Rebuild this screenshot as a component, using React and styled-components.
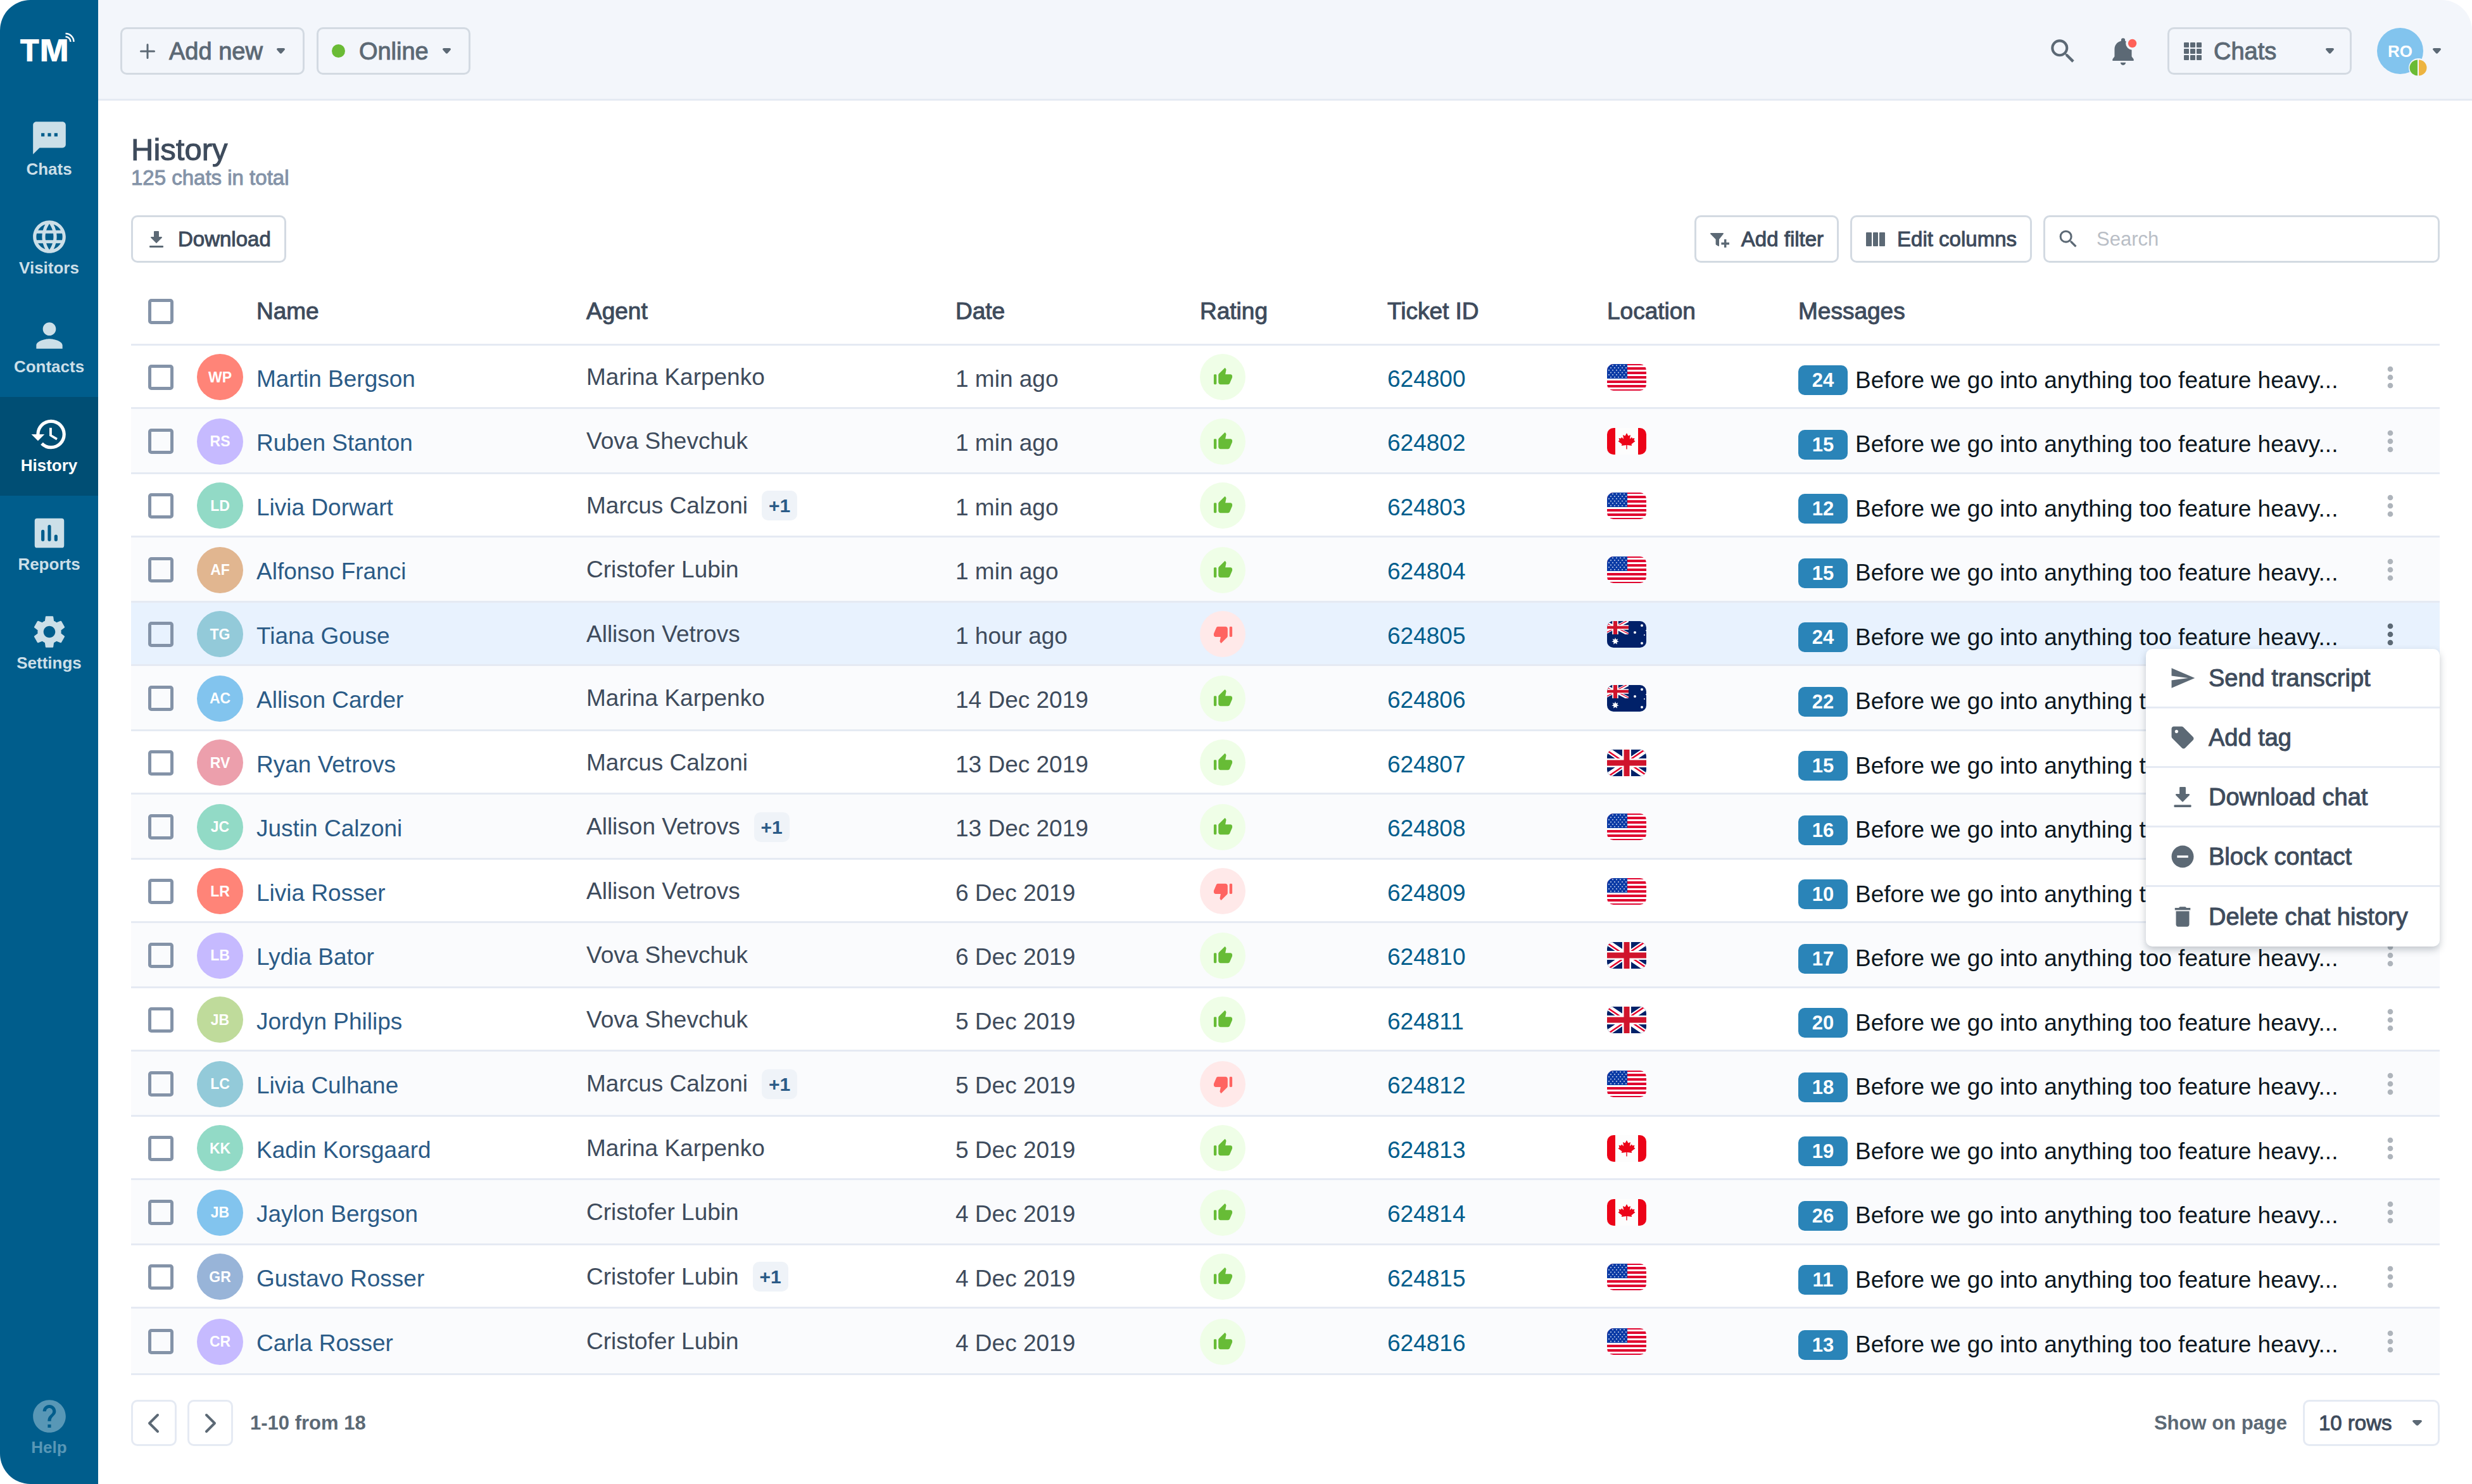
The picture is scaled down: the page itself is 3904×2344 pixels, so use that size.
import styled, { createGlobalStyle, css } from 'styled-components';
import {
  MdDelete,
  MdHelp,
  MdHistory,
  MdLanguage,
  MdMoreVert,
  MdPerson,
  MdRemoveCircle,
  MdSearch,
  MdSell,
  MdSend,
  MdSettings,
  MdSms,
} from 'react-icons/md';

const GlobalStyle = createGlobalStyle`
  :root {
    --brand: #005d8c;
    --brand-dark: #004e74;
    --topbar: #f3f6fb;
    --line: #e5eaf3;
    --control: #d3dae2;
    --ink: #3e4b5c;
    --slate: #5c6975;
    --muted: #8493a8;
    --name: #2b5b87;
    --badge: #2a84b8;
  }

  *,
  *::before,
  *::after {
    box-sizing: border-box;
  }

  body {
    margin: 0;
    background-color: #fff;
    color: var(--ink);
    font-family: 'Liberation Sans', Arial, sans-serif;
    font-size: 37px;
    line-height: 44px;
  }

  button,
  input,
  select {
    font: inherit;
    color: inherit;
    margin: 0;
  }

  svg {
    display: block;
    flex-shrink: 0;
  }
`;

/* There is no 500 weight in the font, a thin stroke stands in for it */
const medium = css`
  -webkit-text-stroke: 1px;
`;

const Layout = styled.div`
  display: grid;
  grid-template-columns: 155px 1fr;
  min-height: 100vh;
`;

/* ---------- Sidebar ---------- */

const Sidebar = styled.aside`
  display: flex;
  flex-direction: column;
  background-color: var(--brand);
  border-radius: 48px 0 0 48px;
  overflow: hidden;
  padding-bottom: 10px;
`;

const Logo = styled.a`
  position: relative;
  display: flex;
  align-items: center;
  justify-content: center;
  height: 159px;
  padding-right: 16px;
  color: #fff;
  font-family: Inter, sans-serif;
  font-size: 48px;
  font-weight: 800;
  line-height: 48px;
  text-decoration: none;

  svg {
    position: absolute;
    left: 102px;
    top: 50px;
  }
`;

const Nav = styled.nav`
  flex: 1;
  display: flex;
  flex-direction: column;
`;

const NavLink = styled.a`
  display: flex;
  flex-direction: column;
  align-items: center;
  gap: 3px;
  height: 156px;
  padding-top: 28px;
  color: ${props => (props.$faded ? '#5897b6' : '#ccdfe8')};
  font-size: 26px;
  font-weight: 700;
  line-height: 30px;
  text-decoration: none;

  ${props =>
    props.$active &&
    css`
      color: #fff;
      background-color: var(--brand-dark);
    `}

  svg {
    width: 62px;
    height: 62px;
  }
`;

/* ---------- Top bar ---------- */

const Topbar = styled.header`
  display: flex;
  justify-content: space-between;
  padding: 43px 49px 38px 35px;
  background-color: var(--topbar);
  border-bottom: 3px solid var(--line);
  border-radius: 0 48px 0 0;
  color: var(--slate);
  font-size: 38px;
`;

const TopGroup = styled.div`
  display: flex;
  align-items: center;
  gap: ${props => props.$gap}px;
`;

const TopButton = styled.button`
  display: flex;
  align-items: center;
  height: 75px;
  gap: ${props => props.$gap}px;
  padding: 0 28px 0 ${props => props.$left}px;
  background: none;
  border: 3px solid var(--control);
  border-radius: 10px;
  cursor: pointer;
  ${medium}
`;

const StatusDot = styled.span`
  width: 21px;
  height: 21px;
  border-radius: 50%;
  background-color: #6abb35;
`;

const IconButton = styled.button`
  display: flex;
  padding: 0;
  border: 0;
  background: none;
  cursor: pointer;
  color: ${props => props.$color || 'inherit'};
`;

const SelectBox = styled.div`
  display: grid;
  align-items: center;
  width: ${props => props.$width}px;

  > * {
    grid-area: 1 / 1;
  }

  > svg {
    pointer-events: none;
  }

  > svg:last-child {
    justify-self: end;
    margin-right: 28px;
  }

  > svg:first-child:not(:last-child) {
    margin-left: 26px;
  }
`;

const Select = styled.select`
  appearance: none;
  width: 100%;
  background: none;
  cursor: pointer;
  ${medium}
`;

const ModuleSelect = styled(Select)`
  height: 75px;
  padding: 0 50px 0 70px;
  border: 3px solid var(--control);
  border-radius: 10px;
`;

const Account = styled.button`
  display: flex;
  align-items: center;
  gap: 15px;
  margin-left: -5px;
  padding: 0;
  border: 0;
  background: none;
  cursor: pointer;
`;

const AccountAvatar = styled.span`
  position: relative;
  display: flex;
  align-items: center;
  justify-content: center;
  width: 73px;
  height: 73px;
  border-radius: 50%;
  background-color: #82c4ee;
  color: #fff;
  font-size: 26px;
  font-weight: 700;

  svg {
    position: absolute;
    right: -7px;
    bottom: -5px;
  }
`;

/* ---------- Page head ---------- */

const Main = styled.main`
  padding: 49px 51px 40px 52px;
`;

const Title = styled.h1`
  margin: 0;
  font-size: 49px;
  font-weight: 400;
  line-height: 56px;
  ${medium}
`;

const Subtitle = styled.p`
  margin: 0;
  color: var(--muted);
  font-size: 33px;
  line-height: 34px;
  ${medium}
`;

const Toolbar = styled.div`
  display: flex;
  align-items: center;
  gap: 18px;
  margin: 42px 0 24px;
`;

const Spacer = styled.div`
  flex: 1;
`;

const ToolButton = styled.button`
  display: flex;
  align-items: center;
  gap: 17px;
  height: 75px;
  padding: 0 21px 0 20px;
  background-color: #fff;
  border: 3px solid var(--control);
  border-radius: 10px;
  font-size: 33px;
  cursor: pointer;
  ${medium}

  svg {
    color: var(--slate);
  }
`;

const SearchField = styled.label`
  display: flex;
  align-items: center;
  gap: 26px;
  width: 626px;
  height: 75px;
  padding: 0 18px;
  border: 3px solid var(--control);
  border-radius: 10px;
  color: var(--slate);

  input {
    flex: 1;
    min-width: 0;
    padding: 0;
    border: 0;
    outline: 0;
    background: none;
    font-size: 31px;
  }

  input::placeholder {
    color: #b9bec6;
    opacity: 1;
  }
`;

/* ---------- Table ---------- */

const Table = styled.table`
  width: 100%;
  table-layout: fixed;
  border-collapse: separate;
  border-spacing: 0;
`;

const HeadCell = styled.th`
  height: 107px;
  padding: 2px 0 0;
  border-bottom: 3px solid var(--line);
  font-weight: 400;
  text-align: left;
  ${medium}
`;

const Cell = styled.td`
  padding: 2px 0 0;
  border-bottom: 3px solid var(--line);
  white-space: nowrap;
`;

const TextCell = styled(Cell)`
  padding-top: 8px;
`;

const MessageCell = styled(Cell)`
  padding-top: 12px;
`;

const ActionCell = styled(Cell)`
  position: relative;
  padding-left: 39px;
`;

const Row = styled.tr`
  height: 100px;

  &:nth-child(even) {
    height: 103px;
    background-color: #fafbfd;
  }

  &:last-child {
    height: 105px;
  }

  ${props =>
    props.$selected &&
    css`
      background-color: #e8f2fe;
    `}
`;

const Checkbox = styled.input.attrs({ type: 'checkbox' })`
  appearance: none;
  display: block;
  width: 40px;
  height: 40px;
  margin: 0 0 0 27px;
  border: 5px solid var(--muted);
  border-radius: 5px;

  &:checked {
    background-color: var(--muted);
  }
`;

const Avatar = styled.span`
  display: flex;
  align-items: center;
  justify-content: center;
  width: 73px;
  height: 73px;
  border-radius: 50%;
  background-color: ${props => props.$color};
  color: #fff;
  font-size: 23px;
  font-weight: 700;
`;

const TableLink = styled.a`
  color: ${props => props.$color};
  text-decoration: none;
`;

const Inline = styled.div`
  display: flex;
  align-items: center;
  gap: ${props => props.$gap}px;
`;

const More = styled.span`
  width: 56px;
  height: 47px;
  border-radius: 10px;
  background-color: #eff3f8;
  color: var(--name);
  font-size: 30px;
  font-weight: 700;
  line-height: 47px;
  text-align: center;
`;

const Rating = styled.span`
  display: flex;
  align-items: center;
  justify-content: center;
  width: 72px;
  height: 73px;
  border-radius: 50%;
  color: ${props => (props.$bad ? '#ff6461' : '#67bc36')};
  background-color: ${props => (props.$bad ? '#ffe9e9' : '#effee7')};

  svg {
    transform: ${props => (props.$bad ? 'rotate(180deg)' : 'none')};
  }
`;

const FlagSvg = styled.svg`
  border-radius: 10px;
`;

const Count = styled.span`
  width: 78px;
  height: 47px;
  border-radius: 10px;
  background-color: var(--badge);
  color: #fff;
  font-size: 31px;
  font-weight: 700;
  line-height: 47px;
  text-align: center;
`;

const Preview = styled.span`
  color: #0b1620;
`;

const Menu = styled.div`
  position: absolute;
  z-index: 2;
  top: 73px;
  right: 0;
  width: 464px;
  background-color: #fff;
  border-radius: 10px;
  box-shadow: 0 5px 12px rgba(30, 45, 60, 0.26);
`;

const MenuItem = styled.button`
  display: flex;
  align-items: center;
  gap: 20px;
  width: 100%;
  height: 94px;
  padding: 0 0 0 37px;
  border: 0;
  border-bottom: 3px solid var(--line);
  background: none;
  font-size: 38px;
  cursor: pointer;
  ${medium}

  &:last-child {
    border-bottom: 0;
  }

  svg {
    color: var(--slate);
  }
`;

/* ---------- Footer ---------- */

const Footer = styled.footer`
  display: flex;
  align-items: center;
  gap: 17px;
  margin-top: 39px;
  color: var(--slate);
  font-size: 31px;
`;

const PageButton = styled.button`
  display: flex;
  align-items: center;
  justify-content: center;
  width: 72px;
  height: 73px;
  padding: 0;
  background-color: #fff;
  border: 3px solid var(--line);
  border-radius: 10px;
  cursor: pointer;
`;

const Strong = styled.span`
  margin: 0 8px 0 10px;
  font-weight: 700;
`;

const RowsSelect = styled(Select)`
  height: 73px;
  padding: 0 50px 0 22px;
  border: 3px solid var(--line);
  border-radius: 10px;
  color: var(--ink);
  font-size: 33px;
`;

/* ---------- Data ---------- */

const navItems = [
  { label: 'Chats', Icon: MdSms },
  { label: 'Visitors', Icon: MdLanguage },
  { label: 'Contacts', Icon: MdPerson },
  { label: 'History', Icon: MdHistory, active: true },
  { label: 'Reports', Icon: ReportsIcon },
  { label: 'Settings', Icon: MdSettings },
];

const columns = [
  ['Name', 521],
  ['Agent', 583],
  ['Date', 386],
  ['Rating', 296],
  ['Ticket ID', 347],
  ['Location', 302],
];

const chats = [
  { initials: 'WP', color: '#ff8478', name: 'Martin Bergson', agent: 'Marina Karpenko', date: '1 min ago', ticket: 624800, flag: 'us', count: 24 },
  { initials: 'RS', color: '#c6baff', name: 'Ruben Stanton', agent: 'Vova Shevchuk', date: '1 min ago', ticket: 624802, flag: 'ca', count: 15 },
  { initials: 'LD', color: '#92dac6', name: 'Livia Dorwart', agent: 'Marcus Calzoni', more: true, date: '1 min ago', ticket: 624803, flag: 'us', count: 12 },
  { initials: 'AF', color: '#e1b690', name: 'Alfonso Franci', agent: 'Cristofer Lubin', date: '1 min ago', ticket: 624804, flag: 'us', count: 15 },
  { initials: 'TG', color: '#93cad9', name: 'Tiana Gouse', agent: 'Allison Vetrovs', date: '1 hour ago', bad: true, ticket: 624805, flag: 'au', count: 24, selected: true },
  { initials: 'AC', color: '#82c4ee', name: 'Allison Carder', agent: 'Marina Karpenko', date: '14 Dec 2019', ticket: 624806, flag: 'au', count: 22 },
  { initials: 'RV', color: '#ec9fac', name: 'Ryan Vetrovs', agent: 'Marcus Calzoni', date: '13 Dec 2019', ticket: 624807, flag: 'gb', count: 15 },
  { initials: 'JC', color: '#92dac6', name: 'Justin Calzoni', agent: 'Allison Vetrovs', more: true, date: '13 Dec 2019', ticket: 624808, flag: 'us', count: 16 },
  { initials: 'LR', color: '#ff8478', name: 'Livia Rosser', agent: 'Allison Vetrovs', date: '6 Dec 2019', bad: true, ticket: 624809, flag: 'us', count: 10 },
  { initials: 'LB', color: '#c6baff', name: 'Lydia Bator', agent: 'Vova Shevchuk', date: '6 Dec 2019', ticket: 624810, flag: 'gb', count: 17 },
  { initials: 'JB', color: '#bfdb9b', name: 'Jordyn Philips', agent: 'Vova Shevchuk', date: '5 Dec 2019', ticket: 624811, flag: 'gb', count: 20 },
  { initials: 'LC', color: '#93cad9', name: 'Livia Culhane', agent: 'Marcus Calzoni', more: true, date: '5 Dec 2019', bad: true, ticket: 624812, flag: 'us', count: 18 },
  { initials: 'KK', color: '#92dac6', name: 'Kadin Korsgaard', agent: 'Marina Karpenko', date: '5 Dec 2019', ticket: 624813, flag: 'ca', count: 19 },
  { initials: 'JB', color: '#82c4ee', name: 'Jaylon Bergson', agent: 'Cristofer Lubin', date: '4 Dec 2019', ticket: 624814, flag: 'ca', count: 26 },
  { initials: 'GR', color: '#98b4d8', name: 'Gustavo Rosser', agent: 'Cristofer Lubin', more: true, date: '4 Dec 2019', ticket: 624815, flag: 'us', count: 11 },
  { initials: 'CR', color: '#c6baff', name: 'Carla Rosser', agent: 'Cristofer Lubin', date: '4 Dec 2019', ticket: 624816, flag: 'us', count: 13 },
];

const menuItems = [
  ['Send transcript', MdSend],
  ['Add tag', MdSell],
  ['Download chat', DownloadIcon],
  ['Block contact', MdRemoveCircle],
  ['Delete chat history', MdDelete],
];

/* ---------- Icons ---------- */

function ReportsIcon() {
  return (
    <svg viewBox="0 0 24 24" fill="currentColor" fillRule="evenodd">
      <path d="M4.500 3h15A1.500 1.500 0 0 1 21 4.500v15a1.500 1.500 0 0 1-1.500 1.500h-15A1.500 1.500 0 0 1 3 19.500v-15A1.500 1.500 0 0 1 4.500 3zM7 11v5a1 1 0 0 0 2 0v-5a1 1 0 0 0-2 0zM11 8v8a1 1 0 0 0 2 0V8a1 1 0 0 0-2 0zM15 14v2a1 1 0 0 0 2 0v-2a1 1 0 0 0-2 0z" />
    </svg>
  );
}

function DownloadIcon({ size = 34 }) {
  return (
    <svg width={size} height={size} viewBox="0 0 34 34" fill="currentColor">
      <path d="M14 4h6a1 1 0 0 1 1 1v8h4a1 1 0 0 1 .8 1.600l-8 8a1 1 0 0 1-1.600 0l-8-8A1 1 0 0 1 9 13h4V5a1 1 0 0 1 1-1z" />
      <rect x="6" y="27" width="22" height="3" rx="1" />
    </svg>
  );
}

function FilterIcon() {
  return (
    <svg width="34" height="34" viewBox="0 0 34 34" fill="currentColor">
      <path d="M3 7h19a1 1 0 0 1 .8 1.600L16 17v10a1 1 0 0 1-1.400.8l-3-1.800a2 2 0 0 1-1-1.600V17L2.200 8.600A1 1 0 0 1 3 7z" />
      <path d="M24 17h3.400v5H32v3.400h-4.600V30H24v-4.600h-4.600V22H24z" />
    </svg>
  );
}

function ColumnsIcon() {
  return (
    <svg width="34" height="34" viewBox="0 0 34 34" fill="currentColor">
      <rect x="2" y="6" width="9" height="22" rx="1" />
      <rect x="13" y="6" width="8" height="22" rx="1" />
      <rect x="23" y="6" width="9" height="22" rx="1" />
    </svg>
  );
}

function GridIcon() {
  const steps = [0, 10, 20];
  return (
    <svg width="28" height="28" viewBox="0 0 28 28" fill="currentColor">
      {steps.map(y => steps.map(x => <rect key={`${x}-${y}`} x={x} y={y} width="8" height="8" rx="1" />))}
    </svg>
  );
}

function PlusIcon() {
  return (
    <svg width="24" height="24" viewBox="0 0 24 24" stroke="currentColor" strokeWidth="3" strokeLinecap="round">
      <path d="M12 1.500v21M1.500 12h21" />
    </svg>
  );
}

function Caret({ size = 13 }) {
  return (
    <svg width={size} height="9" viewBox="0 0 13 9" preserveAspectRatio="none" fill="currentColor">
      <path d="M2 0h9c1.700 0 2.500 1.700 1.400 3L8 8c-.8 1-2.200 1-3 0L.6 3C-.5 1.700.3 0 2 0z" />
    </svg>
  );
}

function BellIcon() {
  return (
    <svg width="50" height="50" viewBox="0 0 24 24" fill="currentColor">
      <path d="M12 22.500c1.100 0 2-.9 2-2h-4c0 1.100.9 2 2 2zM18.500 16v-5.500c0-3.100-1.900-5.600-5-6.300V3.500a1.500 1.500 0 0 0-3 0v.7c-3.100.7-5 3.200-5 6.300V16L4 18v1.200h16V18z" />
      <circle cx="19" cy="6" r="5" fill="#f3f6fb" />
      <circle cx="19" cy="6" r="3.200" fill="#ff6158" />
    </svg>
  );
}

function PresenceIcon() {
  return (
    <svg width="30" height="30" viewBox="0 0 30 30">
      <circle cx="15" cy="15" r="15" fill="#f3f6fb" />
      <path d="M14 2.500a12.500 12.500 0 0 0 0 25z" fill="#6abb35" />
      <path d="M16 2.500a12.500 12.500 0 0 1 0 25z" fill="#edb440" />
    </svg>
  );
}

function ThumbIcon() {
  return (
    <svg width="35" height="35" viewBox="0 0 24 24" fill="currentColor">
      <path d="M3 20h1c.55 0 1-.45 1-1v-9c0-.55-.45-1-1-1H3c-.55 0-1 .45-1 1v9c0 .55.45 1 1 1zm18.830-7.120c.11-.25.17-.52.17-.8V11c0-1.100-.9-2-2-2h-5.500l.92-4.650c.05-.22.02-.46-.08-.66-.23-.45-.52-.86-.88-1.220L14 2 7.590 8.410C7.210 8.790 7 9.300 7 9.830v7.840C7 18.950 8.050 20 9.340 20h8.110c.7 0 1.360-.37 1.720-.97l2.660-6.150z" />
    </svg>
  );
}

function Chevron({ next }) {
  return (
    <svg width="20" height="32" viewBox="0 0 20 32" fill="none" stroke="currentColor" strokeWidth="4" strokeLinecap="round" strokeLinejoin="round">
      <path d={next ? 'M4 3l13 13L4 29' : 'M16 3L3 16l13 13'} />
    </svg>
  );
}

function UnionJack({ id, width, height }) {
  return (
    <svg width={width} height={height} viewBox="0 0 62 42" preserveAspectRatio="none">
      <clipPath id={id}>
        <path d="M31 21h31v21zM31 21v21H0zM31 21H0V0zM31 21V0h31z" />
      </clipPath>
      <rect width="62" height="42" fill="#012169" />
      <path d="M0 0l62 42M62 0L0 42" stroke="#fff" strokeWidth="9" />
      <path d="M0 0l62 42M62 0L0 42" stroke="#e4002b" strokeWidth="5" clipPath={`url(#${id})`} />
      <path d="M31 0v42M0 21h62" stroke="#fff" strokeWidth="14" />
      <path d="M31 0v42M0 21h62" stroke="#d0142c" strokeWidth="9" />
    </svg>
  );
}

function Flag({ country, id }) {
  return (
    <FlagSvg width="62" height="42" viewBox="0 0 62 42" role="img" aria-label={country.toUpperCase()}>
      {country === 'us' && (
        <>
          <rect width="62" height="42" fill="#fff" />
          {[0, 1, 2, 3, 4, 5, 6].map(i => (
            <rect key={i} y={i * 7 - 2} width="62" height="4" fill="#e0032f" />
          ))}
          <rect width="32" height="23" fill="#0a3aa5" />
          {[0, 1, 2, 3, 4, 5].map(r =>
            [0, 1, 2, 3, 4].map(c => (
              <circle key={`${r}-${c}`} cx={c * 6 + (r % 2 ? 6 : 3)} cy={r * 3.7 + 2.3} r="1" fill="#c4d0ec" />
            ))
          )}
        </>
      )}
      {country === 'ca' && (
        <>
          <rect width="62" height="42" fill="#fdfdfd" />
          <rect width="13" height="42" fill="#ec0318" />
          <rect x="49" width="13" height="42" fill="#ec0318" />
          <path
            d="M31 8l2.500 4.500L37 11l-1.200 6.500L39 14.500l1 2 3.500-.5-1 3.500 2 1.500-6 4.500.7 2.500-7.500-1v6.500h-1.400V27l-7.500 1 .7-2.500-6-4.500 2-1.500-1-3.500 3.500.5 1-2 3.200 3L25 11l3.500 1.500z"
            fill="#ec0318"
          />
        </>
      )}
      {country === 'gb' && <UnionJack id={id} width={62} height={42} />}
      {country === 'au' && (
        <>
          <rect width="62" height="42" fill="#012169" />
          <g transform="translate(-8 -1)">
            <UnionJack id={id} width={42} height={22} />
          </g>
          <path
            d="M13 26l1.200 3.200 3.200-1.200-1.600 3 2.900 1.600-3.200.7.300 3.400-2.800-2-2.800 2 .3-3.400-3.200-.7 2.900-1.600-1.600-3 3.200 1.200z"
            fill="#fff"
          />
          <g fill="#fff">
            <circle cx="55" cy="7" r="2" />
            <circle cx="44" cy="18" r="2" />
            <circle cx="59" cy="22" r="1" />
            <circle cx="55" cy="35" r="2" />
            <circle cx="62" cy="15" r="1" />
          </g>
        </>
      )}
    </FlagSvg>
  );
}

/* ---------- Page ---------- */

function App() {
  return (
    <>
      <GlobalStyle />
      <Layout>
        <SideNav />
        <div>
          <Header />
          <Main>
            <Title>History</Title>
            <Subtitle>125 chats in total</Subtitle>
            <Tools />
            <ChatTable />
            <Pagination />
          </Main>
        </div>
      </Layout>
    </>
  );
}

function SideNav() {
  return (
    <Sidebar>
      <Logo href="#home">
        TM
        <svg width="18" height="18" viewBox="0 0 18 18" fill="none" stroke="#fff" strokeWidth="2.500">
          <path d="M1.500 3A13 13 0 0 1 14.500 16M1.500 8A8 8 0 0 1 9.500 16" />
        </svg>
      </Logo>
      <Nav>
        {navItems.map(({ label, Icon, active }) => (
          <NavLink href={`#${label.toLowerCase()}`} key={label} $active={active}>
            <Icon />
            {label}
          </NavLink>
        ))}
      </Nav>
      <NavLink href="#help" $faded>
        <MdHelp />
        Help
      </NavLink>
    </Sidebar>
  );
}

function Header() {
  return (
    <Topbar>
      <TopGroup $gap={19}>
        <TopButton $gap={22} $left={28} aria-haspopup="menu">
          <PlusIcon />
          Add new
          <Caret />
        </TopButton>
        <TopButton $gap={22} $left={21} aria-haspopup="menu">
          <StatusDot />
          Online
          <Caret />
        </TopButton>
      </TopGroup>
      <TopGroup $gap={45}>
        <IconButton aria-label="Search">
          <MdSearch size={50} />
        </IconButton>
        <IconButton aria-label="Notifications">
          <BellIcon />
        </IconButton>
        <SelectBox $width={291}>
          <GridIcon />
          <ModuleSelect aria-label="Module">
            <option>Chats</option>
          </ModuleSelect>
          <Caret />
        </SelectBox>
        <Account aria-label="Account">
          <AccountAvatar>
            RO
            <PresenceIcon />
          </AccountAvatar>
          <Caret />
        </Account>
      </TopGroup>
    </Topbar>
  );
}

function Tools() {
  return (
    <Toolbar>
      <ToolButton>
        <DownloadIcon />
        Download
      </ToolButton>
      <Spacer />
      <ToolButton>
        <FilterIcon />
        Add filter
      </ToolButton>
      <ToolButton>
        <ColumnsIcon />
        Edit columns
      </ToolButton>
      <SearchField>
        <MdSearch size={37} />
        <input type="text" placeholder="Search" aria-label="Search chats" />
      </SearchField>
    </Toolbar>
  );
}

function ChatTable() {
  return (
    <Table>
      <colgroup>
        <col width="104" />
        <col width="94" />
        {columns.map(([label, width]) => (
          <col key={label} width={width} />
        ))}
        <col />
        <col width="143" />
      </colgroup>
      <thead>
        <tr>
          <HeadCell>
            <Checkbox aria-label="Select all" />
          </HeadCell>
          <HeadCell />
          {columns.map(([label]) => (
            <HeadCell key={label}>{label}</HeadCell>
          ))}
          <HeadCell>Messages</HeadCell>
          <HeadCell />
        </tr>
      </thead>
      <tbody>
        {chats.map(chat => (
          <ChatRow chat={chat} key={chat.ticket} />
        ))}
      </tbody>
    </Table>
  );
}

function ChatRow({ chat }) {
  const { initials, color, name, agent, more, date, bad, ticket, flag, count, selected } = chat;

  return (
    <Row $selected={selected}>
      <Cell>
        <Checkbox aria-label={`Select ${name}`} />
      </Cell>
      <Cell>
        <Avatar $color={color}>{initials}</Avatar>
      </Cell>
      <TextCell>
        <TableLink href={`#${ticket}`} $color="var(--name)">
          {name}
        </TableLink>
      </TextCell>
      <Cell>
        <Inline $gap={22}>
          {agent}
          {more && <More>+1</More>}
        </Inline>
      </Cell>
      <TextCell>{date}</TextCell>
      <Cell>
        <Rating $bad={bad}>
          <ThumbIcon />
        </Rating>
      </Cell>
      <TextCell>
        <TableLink href={`#${ticket}`} $color="var(--brand)">
          {ticket}
        </TableLink>
      </TextCell>
      <Cell>
        <Flag country={flag} id={`jack-${ticket}`} />
      </Cell>
      <MessageCell>
        <Inline $gap={12}>
          <Count>{count}</Count>
          <Preview>Before we go into anything too feature heavy...</Preview>
        </Inline>
      </MessageCell>
      <ActionCell>
        <IconButton aria-label={`Actions for ${name}`} $color={selected ? 'var(--slate)' : '#aeb4bb'}>
          <MdMoreVert size={52} />
        </IconButton>
        {selected && <ActionMenu />}
      </ActionCell>
    </Row>
  );
}

function ActionMenu() {
  return (
    <Menu role="menu">
      {menuItems.map(([label, Icon]) => (
        <MenuItem key={label} role="menuitem">
          <Icon size={42} />
          {label}
        </MenuItem>
      ))}
    </Menu>
  );
}

function Pagination() {
  return (
    <Footer>
      <PageButton aria-label="Previous page">
        <Chevron />
      </PageButton>
      <PageButton aria-label="Next page">
        <Chevron next />
      </PageButton>
      <Strong>1-10 from 18</Strong>
      <Spacer />
      <Strong as="label" htmlFor="rows">
        Show on page
      </Strong>
      <SelectBox $width={216}>
        <RowsSelect id="rows">
          <option>10 rows</option>
        </RowsSelect>
        <Caret size={15} />
      </SelectBox>
    </Footer>
  );
}

export default App;
